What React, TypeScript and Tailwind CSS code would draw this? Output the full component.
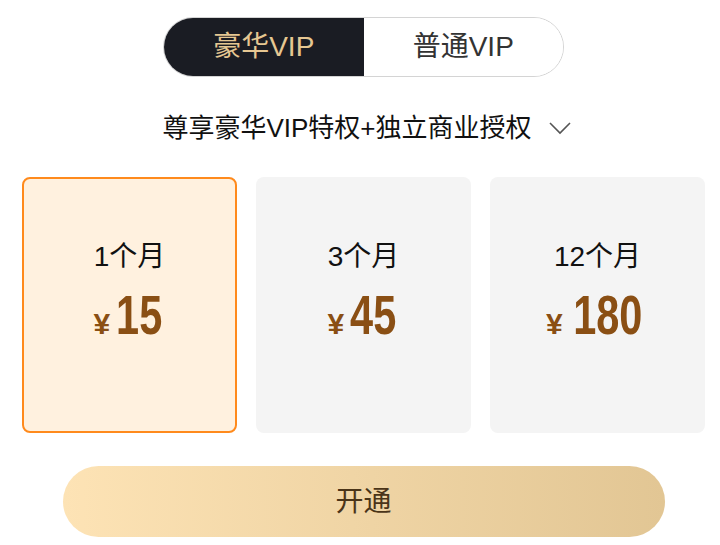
import { useState } from "react"

const plans = [
  { label: "1个月", price: "15" },
  { label: "3个月", price: "45" },
  { label: "12个月", price: "180" },
]

const font = { fontFamily: '"Liberation Sans", "Noto Sans CJK SC", sans-serif' }

export default function App() {
  const [tab, setTab] = useState(0)
  const [selected, setSelected] = useState(0)

  return (
    <div className="w-[720px] h-[545px] bg-white overflow-hidden pl-[22px] pr-[15px] pt-[17px]" style={font}>
      <div className="flex justify-center">
        <div className="flex w-[401px] h-[60px] rounded-full border border-[#d4d4d4] overflow-hidden">
          <button
            onClick={() => setTab(0)}
            className={`flex-1 text-[28px] ${tab === 0 ? "bg-[#1a1c23] text-[#e6c792]" : "bg-white text-[#333]"}`}
          >
            豪华VIP
          </button>
          <button
            onClick={() => setTab(1)}
            className={`flex-1 text-[28px] ${tab === 1 ? "bg-[#1a1c23] text-[#e6c792]" : "bg-white text-[#333]"}`}
          >
            普通VIP
          </button>
        </div>
      </div>

      <div className="flex items-center justify-center gap-[17px] mt-[33px] h-[36px] pl-[6px]">
        <span className="text-[26px] text-[#111]">尊享豪华VIP特权+独立商业授权</span>
        <svg width="22" height="14" viewBox="0 0 22 14" fill="none" stroke="#555" strokeWidth="1.6">
          <path d="M1 2l10 10 10-10" />
        </svg>
      </div>

      <div className="grid grid-cols-3 gap-[19px] mt-[31px]">
        {plans.map((p, i) => (
          <div
            key={p.label}
            onClick={() => setSelected(i)}
            className={`h-[256px] rounded-[8px] flex flex-col items-center pt-[58px] ${
              selected === i ? "bg-[#fff1df] border-2 border-[#ff8a1c]" : "bg-[#f4f4f4] border-2 border-transparent"
            }`}
          >
            <div className="text-[28px] text-[#111] leading-[40px]">{p.label}</div>
            <div className="flex items-baseline gap-[3px] mt-[10px] text-[#8a4f14] font-bold">
              <span className="text-[30px]">¥</span>
              <span className="text-[56px] leading-[56px] inline-block scale-x-[0.74] -mx-[5px]">{p.price}</span>
            </div>
          </div>
        ))}
      </div>

      <div className="flex justify-center mt-[33px]">
        <button className="w-[602px] h-[71px] rounded-full bg-gradient-to-r from-[#fde3b5] to-[#e2c694] text-[28px] text-[#4a3418]">
          开通
        </button>
      </div>
    </div>
  )
}
